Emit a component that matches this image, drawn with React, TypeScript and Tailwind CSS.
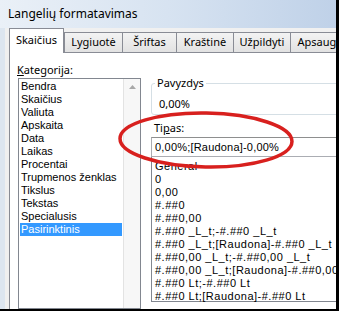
import React from 'react';

const categories = [
  'Bendra',
  'Skaičius',
  'Valiuta',
  'Apskaita',
  'Data',
  'Laikas',
  'Procentai',
  'Trupmenos ženklas',
  'Tikslus',
  'Tekstas',
  'Specialusis',
  'Pasirinktinis',
];

const formats = [
  'General',
  '0',
  '0,00',
  '#.##0',
  '#.##0,00',
  '#.##0 _L_t;-#.##0 _L_t',
  '#.##0 _L_t;[Raudona]-#.##0 _L_t',
  '#.##0,00 _L_t;-#.##0,00 _L_t',
  '#.##0,00 _L_t;[Raudona]-#.##0,00 _L_t',
  '#.##0 Lt;-#.##0 Lt',
  '#.##0 Lt;[Raudona]-#.##0 Lt',
];

const tabs = [
  { label: 'Lygiuotė', w: 'w-[59px]' },
  { label: 'Šriftas', w: 'w-[55px]' },
  { label: 'Kraštinė', w: 'w-[58px]' },
  { label: 'Užpildyti', w: 'w-[58px]' },
  { label: 'Apsauga', w: 'w-[60px]' },
];

export default function App() {
  return (
    <div className="relative h-[311px] w-[339px] overflow-hidden border-b-2 border-r-[3px] border-black bg-[#dde6f0] font-['Noto_Sans',sans-serif] text-black">
      {/* Title bar */}
      <div className="flex h-[28px] items-center bg-gradient-to-r from-[#eaf0f7] via-[#d7e3f1] to-[#bfd1e8] pl-[8px] text-[12px]">
        Langelių formatavimas
      </div>

      <div className="ml-[5px] flex h-[281px] flex-col bg-[#f0f0f0] pl-[4px]">
        {/* Tabs */}
        <div className="flex h-[24px] items-end">
          <div className="relative z-10 -mb-px flex h-[25px] w-[55px] shrink-0 items-center justify-center border border-b-0 border-[#898c95] bg-white pb-[2px] text-[11px]">
            Skaičius
          </div>
          {tabs.map((t, i) => (
            <div
              key={t.label}
              className={`flex h-[20px] shrink-0 items-center justify-center whitespace-nowrap border border-b-0 border-[#898c95] bg-gradient-to-b from-[#f3f3f3] to-[#e2e2e2] text-[11px] ${t.w} ${i > 0 ? '-ml-px' : ''}`}
            >
              {t.label}
            </div>
          ))}
        </div>

        {/* Tab page */}
        <div className="flex flex-1 overflow-hidden border-l border-t border-[#898c95] bg-white">
          {/* Category column */}
          <div className="flex w-[130px] shrink-0 flex-col pl-[7px] pt-[10px]">
            <div className="h-[14px] text-[11px] leading-[14px]">
              <span className="underline">K</span>ategorija:
            </div>
            <div className="ml-px mt-px flex h-[240px] w-[123px] border border-[#828790] font-['Liberation_Sans',sans-serif] text-[11px]">
              <div className="flex flex-1 flex-col pt-px">
                {categories.map((c) => (
                  <div
                    key={c}
                    className={`mx-px h-[13px] whitespace-nowrap pl-px leading-[13px] ${c === 'Pasirinktinis' ? 'bg-[#3399ff] text-white' : ''}`}
                  >
                    {c}
                  </div>
                ))}
              </div>
              <div className="flex w-[17px] shrink-0 justify-center border-l border-[#e3e3e3] bg-[#f7f7f7] pt-[6px]">
                <svg width="7" height="4" viewBox="0 0 7 4">
                  <path d="M0 4 L3.5 0 L7 4 Z" fill="#a8a8a8" />
                </svg>
              </div>
            </div>
          </div>

          {/* Right column */}
          <div className="ml-[11px] flex w-[200px] shrink-0 flex-col pt-[30px]">
            <div className="relative h-[32px] rounded-[3px] border border-[#d5dfe5]">
              <span className="absolute -top-[8px] left-[3px] bg-white px-[2px] text-[11px] leading-[14px]">
                Pavyzdys
              </span>
              <div className="pl-[7px] pt-[13px] text-[11px] leading-[14px]">0,00%</div>
            </div>

            <div className="mt-[6px] h-[14px] pl-[3px] text-[11px] leading-[14px]">
              Ti<span className="underline">p</span>as:
            </div>
            <div className="mt-[2px] flex h-[20px] items-center border border-[#abadb3] border-t-[#8e8f8f] pl-[3px] font-['Liberation_Sans',sans-serif] text-[11px] tracking-[0.2px]">
              0,00%;[Raudona]-0,00%
            </div>
            <div className="h-[145px] border border-t-0 border-[#828790] pl-[3px] pt-[3px] font-['Liberation_Sans',sans-serif] text-[11px] tracking-[0.5px]">
              {formats.map((f) => (
                <div key={f} className="h-[13px] whitespace-nowrap leading-[13px]">
                  {f}
                </div>
              ))}
            </div>
          </div>
        </div>
      </div>

      {/* Red annotation ellipse */}
      <svg className="pointer-events-none absolute left-0 top-0" width="339" height="311" viewBox="0 0 339 311">
        <ellipse cx="206" cy="140" rx="86" ry="27" fill="none" stroke="#d8201e" strokeWidth="3.5" transform="rotate(1 206 140)" />
      </svg>
    </div>
  );
}
